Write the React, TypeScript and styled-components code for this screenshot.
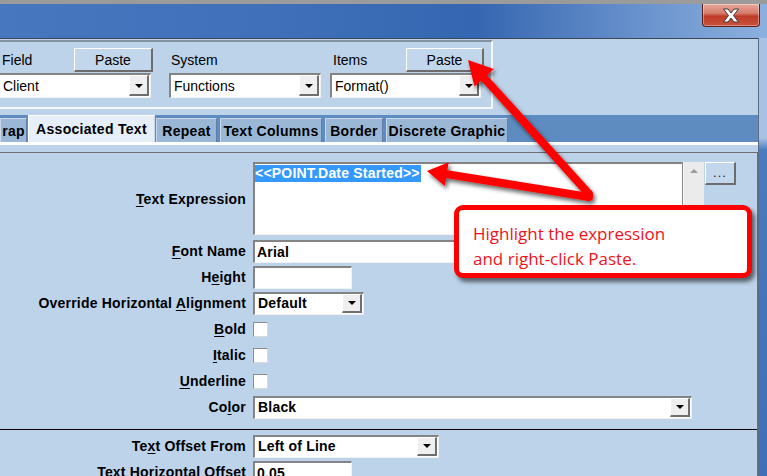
import React from "react";
import styled, { createGlobalStyle } from "styled-components";

const Global = createGlobalStyle`
  html, body { margin: 0; padding: 0; width: 767px; height: 476px; overflow: hidden; background: #bdd3ea; }
  * { box-sizing: border-box; }
`;

const Window = styled.div`
  position: relative;
  width: 767px;
  height: 476px;
  overflow: hidden;
  display: flex;
  flex-direction: column;
  background: #bdd3ea;
  font-family: "Liberation Sans", Arial, sans-serif;
  color: #000;
`;

const TitleBar = styled.div`
  flex: none;
  height: 38px;
  border-top: 4px solid #9b9b9b;
  background: linear-gradient(90deg, #4677bf 0%, #3f70b9 35%, #3566b1 62%, #6a93cd 84%, #8cb0de 100%);
  display: flex;
  justify-content: flex-end;
  align-items: flex-start;
  padding-right: 7px;
`;

const CloseButton = styled.div`
  width: 58px;
  height: 23px;
  border: 1px solid #5a2219;
  border-top: none;
  border-radius: 0 0 4px 4px;
  background: linear-gradient(180deg, #e9a99c 0%, #d67b6b 42%, #bf3b28 56%, #c8523c 100%);
  box-shadow: inset 0 0 0 1px rgba(255, 255, 255, 0.35);
  display: flex;
  align-items: center;
  justify-content: center;
`;

const Body = styled.div`
  flex: 1;
  display: flex;
  min-height: 0;
`;

const Main = styled.div`
  width: 758px;
  flex: none;
  display: flex;
  flex-direction: column;
  border-top: 1px solid #3b4757;
`;

const Frame = styled.div`
  flex: 1;
  border-left: 1px solid #5d6c80;
  background: linear-gradient(180deg, #a7c2e4 0px, #a7c2e4 100px, #4a7bc0 112px, #3e6fb8 100%);
`;

const TopRow = styled.div`
  height: 76px;
  flex: none;
  padding-top: 1px;
  display: flex;
`;

const TopPanel = styled.div`
  width: 493px;
  height: 69px;
  border-top: 2px solid #8592a1;
  border-right: 2px solid #f5f8fc;
  border-bottom: 2px solid #f5f8fc;
  padding-top: 6px;
  display: flex;
  align-items: flex-start;
`;

const PanelColumn = styled.div<{ $w: number; $ml: number }>`
  width: ${(p) => p.$w}px;
  margin-left: ${(p) => p.$ml}px;
  display: flex;
  flex-direction: column;
  gap: 1px;
`;

const PanelHeader = styled.div`
  height: 24px;
  display: flex;
  align-items: center;
  justify-content: space-between;
`;

const PanelLabel = styled.span<{ $pl: number }>`
  padding-left: ${(p) => p.$pl}px;
  font-size: 14px;
  line-height: 16px;
`;

const RaisedButton = styled.div<{ $w: number; $h: number }>`
  width: ${(p) => p.$w}px;
  height: ${(p) => p.$h}px;
  background: #c3d7ec;
  border-style: solid;
  border-width: 1px 2px 2px 1px;
  border-color: #ffffff #6c6c6c #6c6c6c #ffffff;
  display: flex;
  align-items: center;
  justify-content: center;
  font-size: 14px;
  color: #000;
`;

const Combo = styled.div<{ $w: number; $h: number; $ml?: number }>`
  width: ${(p) => p.$w}px;
  height: ${(p) => p.$h}px;
  margin-left: ${(p) => p.$ml ?? 0}px;
  background: #fff;
  border-style: solid;
  border-width: 2px 1px 1px 2px;
  border-color: #848484 #f2f2f2 #f2f2f2 #848484;
  padding: 0 1px 1px 0;
  display: flex;
  align-items: stretch;
`;

const ComboText = styled.span<{ $bold?: boolean }>`
  flex: 1;
  display: flex;
  align-items: center;
  padding-left: 3px;
  font-size: 14px;
  font-weight: ${(p) => (p.$bold ? 700 : 400)};
  letter-spacing: ${(p) => (p.$bold ? 0.2 : 0)}px;
  white-space: nowrap;
  overflow: hidden;
`;

const DropButton = styled.span`
  width: 20px;
  background: #efefef;
  border-style: solid;
  border-width: 1px 2px 2px 1px;
  border-color: #ffffff #6e6e6e #6e6e6e #ffffff;
  display: flex;
  align-items: center;
  justify-content: center;
`;

const DropTriangle = styled.span`
  width: 0;
  height: 0;
  margin-top: 1px;
  border-left: 4px solid transparent;
  border-right: 4px solid transparent;
  border-top: 4px solid #000;
`;

const TopFiller = styled.div`
  flex: 1;
`;

const TabBar = styled.div`
  height: 27px;
  flex: none;
  background: #5e8cc0;
  display: flex;
  align-items: flex-end;
  gap: 3px;
`;

const Tab = styled.div<{ $w: number; $active?: boolean }>`
  width: ${(p) => p.$w}px;
  height: ${(p) => (p.$active ? 27 : 24)}px;
  margin: 0 ${(p) => (p.$active ? -2 : 0)}px;
  background: ${(p) => (p.$active ? "#e6eef8" : "#9bb7d6")};
  border-style: solid;
  border-width: 1px 1px 0 1px;
  border-color: ${(p) => (p.$active ? "#ffffff #c9d7e8 transparent #ffffff" : "#c9d8ea #5f7fa8 transparent #c9d8ea")};
  display: flex;
  align-items: center;
  justify-content: center;
  font-size: 14px;
  font-weight: 700;
  letter-spacing: 0.3px;
  white-space: nowrap;
  overflow: hidden;
`;

const ContentArea = styled.div`
  flex: 1;
  border-top: 3px solid #ffffff;
  padding-top: 7px;
  display: flex;
  flex-direction: column;
`;

const Group = styled.div`
  flex: 1;
  border-top: 1px solid #6e6e6e;
  border-right: 1px solid #6e6e6e;
  padding-top: 9px;
  display: flex;
  flex-direction: column;
`;

const Row = styled.div<{ $h: number; $mb?: number; $mt?: number }>`
  height: ${(p) => p.$h}px;
  margin-bottom: ${(p) => p.$mb ?? 0}px;
  margin-top: ${(p) => p.$mt ?? 0}px;
  display: grid;
  grid-template-columns: 246px auto;
  column-gap: 7px;
  align-items: center;
  justify-content: start;
`;

const Label = styled.span`
  text-align: right;
  font-size: 14px;
  font-weight: 700;
  letter-spacing: 0.2px;
  white-space: nowrap;
`;

const Key = styled.span`
  text-decoration: underline;
  text-underline-offset: 2px;
`;

const FieldRow = styled.div`
  display: flex;
  align-items: flex-start;
  height: 100%;
`;

const TextBox = styled.div`
  width: 430px;
  height: 73px;
  background: #fff;
  border-style: solid;
  border-width: 2px 1px 1px 2px;
  border-color: #848484 #8a8a8a #f2f2f2 #848484;
  padding-top: 0;
`;

const Selected = styled.span`
  display: inline-block;
  background: #3399ff;
  color: #fff;
  font-size: 14px;
  font-weight: 700;
  letter-spacing: 0.2px;
  line-height: 17px;
  padding-right: 1px;
`;

const ScrollBar = styled.div`
  width: 21px;
  height: 73px;
  background: #ebebeb;
  border-left: 1px solid #f6f6f6;
  display: flex;
  justify-content: center;
  padding-top: 7px;
`;

const UpArrow = styled.span`
  width: 0;
  height: 0;
  border-left: 4px solid transparent;
  border-right: 4px solid transparent;
  border-bottom: 4px solid #9a9a9a;
`;

const EllipsisButton = styled(RaisedButton)`
  margin-left: 1px;
  font-size: 13px;
  letter-spacing: 1px;
  padding-bottom: 2px;
  color: #222;
`;

const TextInput = styled.div<{ $w: number }>`
  width: ${(p) => p.$w}px;
  height: 23px;
  background: #fff;
  border-style: solid;
  border-width: 2px 1px 1px 2px;
  border-color: #848484 #f2f2f2 #f2f2f2 #848484;
  padding-left: 2px;
  display: flex;
  align-items: center;
  font-size: 14px;
  font-weight: 700;
  letter-spacing: 0.2px;
`;

const CheckBox = styled.span`
  width: 15px;
  height: 15px;
  background: #fff;
  border: 1px solid;
  border-color: #8c8c8c #dadada #dadada #8c8c8c;
`;

const Divider = styled.div`
  height: 1px;
  margin-top: 9px;
  background: #000;
`;

const Callout = styled.div`
  position: absolute;
  left: 454px;
  top: 205px;
  width: 298px;
  height: 73px;
  background: #fff;
  border: 5px solid #ff0000;
  border-radius: 9px;
  box-shadow: 3px 4px 4px rgba(0, 0, 0, 0.55);
  padding: 11px 0 0 14px;
  font-family: "Open Sans", "Liberation Sans", sans-serif;
  font-size: 17px;
  line-height: 25px;
  color: #f0121b;
`;

const Overlay = styled.svg`
  position: absolute;
  left: 0;
  top: 0;
  width: 767px;
  height: 476px;
  pointer-events: none;
`;

type Pt = [number, number];

function ArrowShape({ tip, tail, w, L, H }: { tip: Pt; tail: Pt; w: number; L: number; H: number }) {
  const dx = tip[0] - tail[0];
  const dy = tip[1] - tail[1];
  const len = Math.hypot(dx, dy);
  const ux = dx / len;
  const uy = dy / len;
  const px = -uy;
  const py = ux;
  const nx = tip[0] - ux * L;
  const ny = tip[1] - uy * L;
  const pts: Pt[] = [
    [tail[0] + (px * w) / 2, tail[1] + (py * w) / 2],
    [nx + (px * w) / 2, ny + (py * w) / 2],
    [nx + px * H, ny + py * H],
    tip,
    [nx - px * H, ny - py * H],
    [nx - (px * w) / 2, ny - (py * w) / 2],
    [tail[0] - (px * w) / 2, tail[1] - (py * w) / 2],
  ];
  return (
    <g>
      <polygon points={pts.map((p) => p.join(",")).join(" ")} strokeLinejoin="round" />
      <circle cx={tail[0]} cy={tail[1]} r={w / 2} />
    </g>
  );
}

function ComboBox({ w, h, text, bold, ml }: { w: number; h: number; text: string; bold?: boolean; ml?: number }) {
  return (
    <Combo $w={w} $h={h} $ml={ml}>
      <ComboText $bold={bold}>{text}</ComboText>
      <DropButton>
        <DropTriangle />
      </DropButton>
    </Combo>
  );
}

export default function App() {
  return (
    <Window>
      <Global />
      <TitleBar>
        <CloseButton>
          <svg width="18" height="15" viewBox="0 0 18 15">
            <path
              d="M1.5 1 H6 L9 5 L12 1 H16.5 L11.5 7.5 L16.5 14 H12 L9 10 L6 14 H1.5 L6.5 7.5 Z"
              fill="#ffffff"
              stroke="#3c3c3c"
              strokeWidth="1"
              strokeLinejoin="round"
            />
          </svg>
        </CloseButton>
      </TitleBar>
      <Body>
        <Main>
          <TopRow>
            <TopPanel>
              <PanelColumn $w={153} $ml={0}>
                <PanelHeader>
                  <PanelLabel $pl={2}>Field</PanelLabel>
                  <RaisedButton $w={79} $h={24}>Paste</RaisedButton>
                </PanelHeader>
                <ComboBox w={153} h={25} ml={-2} text="Client" />
              </PanelColumn>
              <PanelColumn $w={152} $ml={16}>
                <PanelHeader>
                  <PanelLabel $pl={2}>System</PanelLabel>
                </PanelHeader>
                <ComboBox w={152} h={25} text="Functions" />
              </PanelColumn>
              <PanelColumn $w={154} $ml={9}>
                <PanelHeader>
                  <PanelLabel $pl={3}>Items</PanelLabel>
                  <RaisedButton $w={78} $h={24}>Paste</RaisedButton>
                </PanelHeader>
                <ComboBox w={151} h={25} text="Format()" />
              </PanelColumn>
            </TopPanel>
            <TopFiller />
          </TopRow>
          <TabBar>
            <Tab $w={27}>rap</Tab>
            <Tab $w={127} $active>Associated Text</Tab>
            <Tab $w={61}>Repeat</Tab>
            <Tab $w={102}>Text Columns</Tab>
            <Tab $w={58}>Border</Tab>
            <Tab $w={122}>Discrete Graphic</Tab>
          </TabBar>
          <ContentArea>
            <Group>
              <Row $h={73} $mb={3}>
                <Label>
                  <Key>T</Key>ext Expression
                </Label>
                <FieldRow>
                  <TextBox>
                    <Selected>&lt;&lt;POINT.Date Started&gt;&gt;</Selected>
                  </TextBox>
                  <ScrollBar>
                    <UpArrow />
                  </ScrollBar>
                  <EllipsisButton $w={31} $h={23}>...</EllipsisButton>
                </FieldRow>
              </Row>
              <Row $h={26}>
                <Label>
                  <Key>F</Key>ont Name
                </Label>
                <TextInput $w={300}>Arial</TextInput>
              </Row>
              <Row $h={26}>
                <Label>
                  H<Key>e</Key>ight
                </Label>
                <TextInput $w={99} />
              </Row>
              <Row $h={26}>
                <Label>
                  Override Horizontal <Key>A</Key>lignment
                </Label>
                <ComboBox w={111} h={23} text="Default" bold />
              </Row>
              <Row $h={26}>
                <Label>
                  <Key>B</Key>old
                </Label>
                <CheckBox />
              </Row>
              <Row $h={26}>
                <Label>
                  <Key>I</Key>talic
                </Label>
                <CheckBox />
              </Row>
              <Row $h={26}>
                <Label>
                  <Key>U</Key>nderline
                </Label>
                <CheckBox />
              </Row>
              <Row $h={26}>
                <Label>
                  Co<Key>l</Key>or
                </Label>
                <ComboBox w={439} h={23} text="Black" bold />
              </Row>
              <Divider />
              <Row $h={26} $mt={3}>
                <Label>
                  Te<Key>x</Key>t Offset From
                </Label>
                <ComboBox w={186} h={23} text="Left of Line" bold />
              </Row>
              <Row $h={26}>
                <Label>Text Horizontal Offset</Label>
                <TextInput $w={99}>0.05</TextInput>
              </Row>
            </Group>
          </ContentArea>
        </Main>
        <Frame />
      </Body>
      <Callout>
        Highlight the expression
        <br />
        and right-click Paste.
      </Callout>
      <Overlay viewBox="0 0 767 476">
        <defs>
          <filter id="arrowShadow" x="-20%" y="-20%" width="140%" height="140%">
            <feDropShadow dx="2" dy="3" stdDeviation="2" floodColor="#000" floodOpacity="0.6" />
          </filter>
        </defs>
        <g fill="#ff0000" filter="url(#arrowShadow)">
          <ArrowShape tip={[468, 60]} tail={[589, 194]} w={8} L={24} H={13} />
          <ArrowShape tip={[427, 171]} tail={[589, 197]} w={8} L={20} H={12} />
        </g>
      </Overlay>
    </Window>
  );
}
